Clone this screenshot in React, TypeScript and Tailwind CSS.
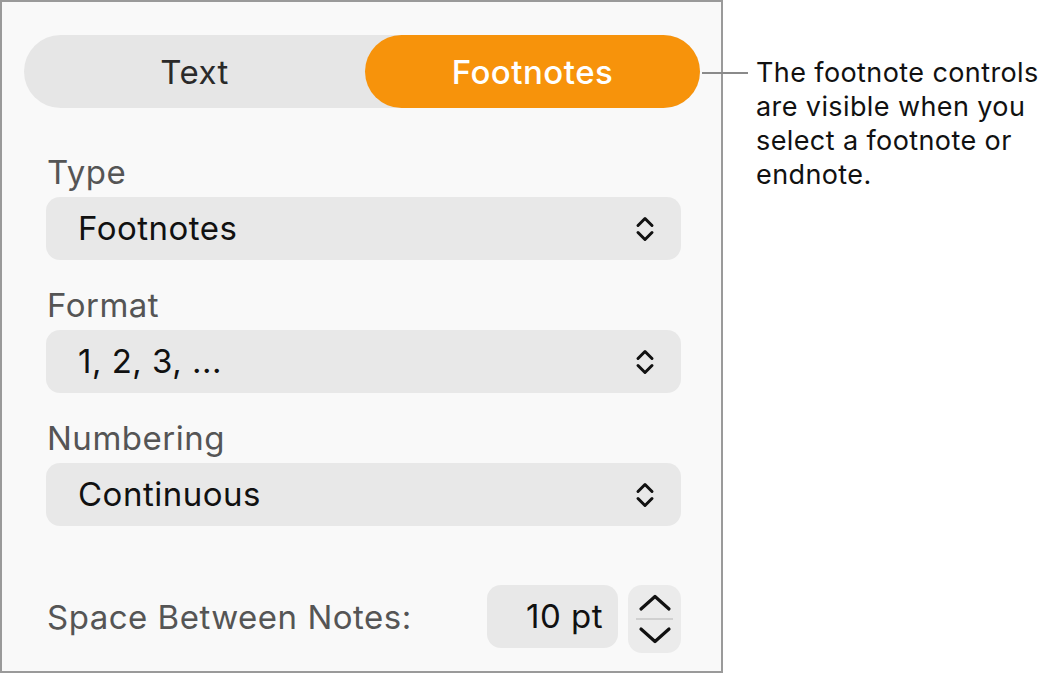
import React from "react";

const font = { fontFamily: "Inter, 'Noto Sans', sans-serif" };

function UpDown() {
  return (
    <svg width="20" height="28" viewBox="0 0 20 28" fill="none" stroke="#111" strokeWidth="3" strokeLinecap="round" strokeLinejoin="round">
      <path d="M3 10.5 L10 3.5 L17 10.5" />
      <path d="M3 17.5 L10 24.5 L17 17.5" />
    </svg>
  );
}

function Select({ value }: { value: string }) {
  return (
    <div className="flex h-[63px] w-[635px] items-center justify-between rounded-[14px] bg-[#e8e8e8] pl-[32px] pr-[26px]">
      <span className="text-[33px] tracking-[0.5px] text-[#111]">{value}</span>
      <UpDown />
    </div>
  );
}

function Field({ label, value }: { label: string; value: string }) {
  return (
    <div className="flex flex-col">
      <div className="h-[40px] pl-[1px] text-[33px] leading-[40px] tracking-[0.5px] text-[#555]">{label}</div>
      <div className="mt-[5px]">
        <Select value={value} />
      </div>
    </div>
  );
}

export default function App() {
  return (
    <div className="flex h-[674px] w-[1044px] items-start bg-white" style={font}>
      {/* Inspector panel */}
      <div className="flex h-[673px] w-[723px] shrink-0 flex-col border-2 border-[#9a9a9a] bg-[#f9f9f9] pl-[44px] pt-[33px]">
        <div className="-ml-[22px] flex h-[73px] w-[676px] rounded-full bg-[#e6e6e6] text-[33px] tracking-[0.5px]">
          <div className="flex w-[341px] items-center justify-center pt-[3px] text-[#2a2a2a]">Text</div>
          <div className="flex flex-1 items-center justify-center rounded-full bg-[#f7930b] pt-[3px] font-medium text-white">
            Footnotes
          </div>
        </div>

        <div className="mt-[44px] flex flex-col gap-[25px]">
          <Field label="Type" value="Footnotes" />
          <Field label="Format" value="1, 2, 3, ..." />
          <Field label="Numbering" value="Continuous" />
        </div>

        <div className="mt-[59px] flex w-[635px] items-start justify-between">
          <span className="mt-[13px] pl-[1px] text-[33px] leading-[38px] tracking-[0.5px] text-[#555]">Space Between Notes:</span>
          <div className="flex items-start gap-[10px]">
            <div className="flex h-[63px] w-[131px] items-center justify-end rounded-[14px] bg-[#e8e8e8] pr-[15px] text-[33px] tracking-[0.5px] text-[#111]">
              10 pt
            </div>
            <div className="flex h-[68px] w-[53px] flex-col items-center justify-between rounded-[14px] bg-[#ebebeb] py-[9px]">
              <svg width="34" height="18" viewBox="0 0 34 18" fill="none" stroke="#111" strokeWidth="3.2" strokeLinecap="round" strokeLinejoin="round">
                <path d="M3 15 L17 2.5 L31 15" />
              </svg>
              <div className="h-[2px] w-[37px] bg-[#d0d0d0]" />
              <svg width="34" height="18" viewBox="0 0 34 18" fill="none" stroke="#111" strokeWidth="3.2" strokeLinecap="round" strokeLinejoin="round">
                <path d="M3 3 L17 15.5 L31 3" />
              </svg>
            </div>
          </div>
        </div>
      </div>

      {/* Callout */}
      <div className="relative flex-1 pt-[56px]">
        <div className="absolute left-[-21px] top-[72px] h-[2px] w-[46px] bg-[#8a8a8a]" />
        <p className="pl-[33px] text-[27px] leading-[34px] tracking-[0.4px] text-[#111]">
          The footnote controls
          <br />
          are visible when you
          <br />
          select a footnote or
          <br />
          endnote.
        </p>
      </div>
    </div>
  );
}
